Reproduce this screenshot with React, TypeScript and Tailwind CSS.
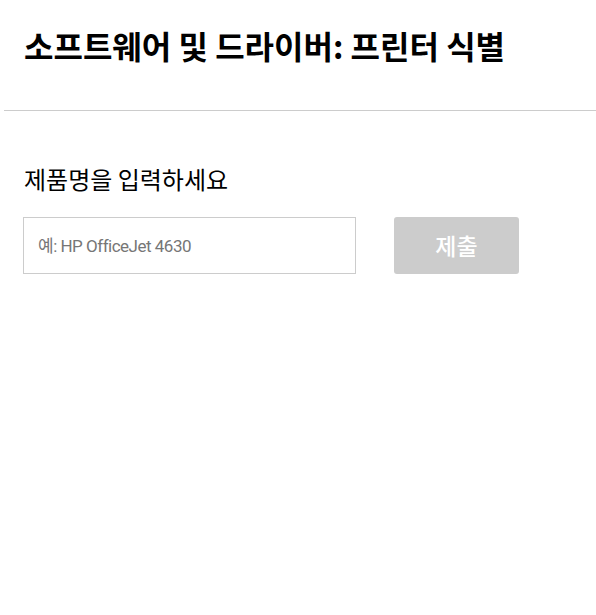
export default function App() {
  return (
    <div
      className="min-h-[615px] w-[596px] bg-white text-black"
      style={{ fontFamily: '"Noto Sans CJK KR", "Noto Sans", sans-serif' }}
    >
      <div className="px-6 pt-[21px] pb-[41px]">
        <h1 className="text-[32px] font-bold leading-[48px]">
          소프트웨어 및 드라이버: 프린터 식별
        </h1>
      </div>
      <div className="ml-1 h-px bg-[#cccccc]" />
      <div className="px-6 pt-[50px]">
        <label className="block text-[24px] leading-[36px]">제품명을 입력하세요</label>
        <div className="mt-[20px] flex items-start gap-[38px]">
          <input
            type="text"
            placeholder="예: HP OfficeJet 4630"
            style={{ fontFamily: 'Roboto, "Noto Sans CJK KR", sans-serif' }}
            className="h-[57px] w-[333px] -ml-px border border-[#cccccc] px-[14px] text-[17px] tracking-[-0.5px] placeholder:text-[#767676] outline-none"
          />
          <button className="h-[57px] w-[125px] rounded-[3px] bg-[#cccccc] text-[23px] font-medium text-white">
            제출
          </button>
        </div>
      </div>
    </div>
  );
}
